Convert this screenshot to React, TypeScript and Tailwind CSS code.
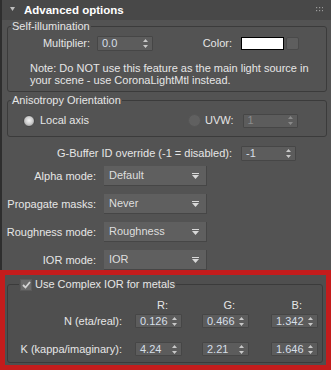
import React from "react";

function SpinArrows({ dim }: { dim?: boolean }) {
    return (
        <svg width="5" height="9" viewBox="0 0 5 9" className="shrink-0">
            <path d="M2.5 0 L5 3 L0 3 Z M0 6 L5 6 L2.5 9 Z" fill={dim ? "#8a8a8a" : "#c8c8c8"} />
        </svg>
    );
}

function Spinner({ value, w, h = "h-[15px]", dim }: { value: string; w: string; h?: string; dim?: boolean }) {
    return (
        <div className={`${w} ${h} flex items-center justify-between pl-[4px] pr-[4px] bg-[#5c5c5c] border border-[#464646] rounded-[1px]`}>
            <span className={dim ? "text-[#8c8c8c]" : "text-[#d6dfe8]"}>{value}</span>
            <SpinArrows dim={dim} />
        </div>
    );
}

function Dropdown({ value }: { value: string }) {
    return (
        <div className="w-[103px] h-[20px] flex items-center justify-between pl-[5px] pr-[7px] bg-[#5f5f5f] border-b border-r border-[#464646]">
            <span className="text-[#dedede]">{value}</span>
            <svg width="7" height="6" viewBox="0 0 7 6">
                <rect x="0" y="0" width="7" height="1" fill="#d8d8d8" />
                <path d="M0 2 L7 2 L3.5 6 Z" fill="#d8d8d8" />
            </svg>
        </div>
    );
}

function DropRow({ label, value }: { label: string; value: string }) {
    return (
        <div className="flex items-center gap-[8px]">
            <div className="w-[94px] text-right whitespace-nowrap">{label}</div>
            <Dropdown value={value} />
        </div>
    );
}

export default function App() {
    return (
        <div className="w-[331px] h-[370px] bg-[#535353] text-[#e6e6e6] text-[11px] leading-[13px] font-['Liberation_Sans',Arial,sans-serif] overflow-hidden">
            <div className="border-l-2 border-[#2e2e2e] h-[270px]">
                {/* header */}
                <div className="h-[20px] bg-[#484848] flex items-center pl-[8px] pr-[5px]">
                    <svg width="5" height="5" viewBox="0 0 5 5" className="mt-[-2px]">
                        <path d="M0 0 L5 0 L2.5 4 Z" fill="#bdbdbd" />
                    </svg>
                    <span className="ml-[9px] font-bold text-[11.5px] text-white">Advanced options</span>
                    <svg width="7" height="5" viewBox="0 0 7 5" className="ml-auto mr-[3px] mt-[-2px]">
                        {[0, 3, 6].map((x) =>
                            [0, 3].map((y) => <rect key={`${x}-${y}`} x={x} y={y} width="1.2" height="1.2" fill="#9a9a9a" />)
                        )}
                    </svg>
                </div>

                {/* self illumination */}
                <fieldset className="ml-[5px] w-[320px] border border-[#3b3b3b] rounded-[3px] pb-[5px]">
                    <legend className="ml-[3px] px-[1px]">Self-illumination</legend>
                    <div className="flex items-center mt-[3px] h-[15px]">
                        <div className="w-[82px] text-right">Multiplier:</div>
                        <div className="ml-[7px]">
                            <Spinner value="0.0" w="w-[56px]" />
                        </div>
                        <div className="w-[79px] text-right">Color:</div>
                        <div className="ml-[9px] w-[43px] h-[13px] bg-white border border-black" />
                        <div className="ml-[2px] w-[13px] h-[13px] bg-[#5e5e5e] border border-[#4a4a4a] rounded-[2px]" />
                    </div>
                    <p className="mt-[11px] pl-[22px] leading-[12px]">
                        Note: Do NOT use this feature as the main light source in
                        <br />
                        your scene - use CoronaLightMtl instead.
                    </p>
                </fieldset>

                {/* anisotropy */}
                <fieldset className="ml-[5px] mt-[2px] w-[320px] border border-[#3b3b3b] rounded-[3px] pb-[8px]">
                    <legend className="ml-[3px] px-[1px]">Anisotropy Orientation</legend>
                    <div className="flex items-center mt-[6px] h-[15px] pl-[15px]">
                        <div className="w-[165px] flex items-center gap-[5px]">
                            <div className="w-[12px] h-[12px] rounded-full bg-[radial-gradient(circle_at_50%_45%,#f4f4f4_0%,#d0d0d0_45%,#858585_100%)] border border-[#474747]" />
                            <span>Local axis</span>
                        </div>
                        <div className="w-[13px] h-[13px] rounded-full bg-[#606060] border border-[#555555]" />
                        <span className="ml-[4px]">UVW:</span>
                        <div className="ml-[9px]">
                            <Spinner value="1" w="w-[55px]" h="h-[14px]" dim />
                        </div>
                    </div>
                </fieldset>

                {/* g-buffer */}
                <div className="flex items-center mt-[9px] gap-[9px]">
                    <div className="w-[230px] text-right">G-Buffer ID override (-1 = disabled):</div>
                    <Spinner value="-1" w="w-[55px]" />
                </div>

                <div className="flex flex-col gap-[8px] mt-[5px]">
                    <DropRow label="Alpha mode:" value="Default" />
                    <DropRow label="Propagate masks:" value="Never" />
                    <DropRow label="Roughness mode:" value="Roughness" />
                    <DropRow label="IOR mode:" value="IOR" />
                </div>
            </div>

            {/* complex IOR */}
            <div className="h-[100px] border-[5px] border-[#c41c1c] bg-[#4f4f4f]">
                <fieldset className="mt-[3px] ml-[2px] w-[316px] h-[85px] border border-[#3b3b3b] rounded-[3px]">
                    <legend className="ml-[11px] px-[1px] flex items-center gap-[3px]">
                        <span className="w-[12px] h-[12px] bg-[#6a6a6a] border border-[#5a5a5a] flex items-center justify-center">
                            <svg width="9" height="8" viewBox="0 0 9 8">
                                <path d="M1 4 L3.5 6.5 L8 1" stroke="#d4d4d4" strokeWidth="1.8" fill="none" />
                            </svg>
                        </span>
                        <span>Use Complex IOR for metals</span>
                    </legend>
                    <div className="flex mt-[8px] h-[13px]">
                        <div className="w-[127px]" />
                        <div className="w-[47px] text-right pr-[14px]">R:</div>
                        <div className="w-[47px] ml-[20px] text-right pr-[14px]">G:</div>
                        <div className="w-[47px] ml-[22px] text-right pr-[16px]">B:</div>
                    </div>
                    <div className="flex items-center mt-[2px]">
                        <div className="w-[114px] text-right">N (eta/real):</div>
                        <div className="ml-[13px]"><Spinner value="0.126" w="w-[47px]" h="h-[14px]" /></div>
                        <div className="ml-[20px]"><Spinner value="0.466" w="w-[47px]" h="h-[14px]" /></div>
                        <div className="ml-[22px]"><Spinner value="1.342" w="w-[47px]" h="h-[14px]" /></div>
                    </div>
                    <div className="flex items-center mt-[14px]">
                        <div className="w-[114px] text-right">K (kappa/imaginary):</div>
                        <div className="ml-[13px]"><Spinner value="4.24" w="w-[47px]" h="h-[14px]" /></div>
                        <div className="ml-[20px]"><Spinner value="2.21" w="w-[47px]" h="h-[14px]" /></div>
                        <div className="ml-[22px]"><Spinner value="1.646" w="w-[47px]" h="h-[14px]" /></div>
                    </div>
                </fieldset>
            </div>
        </div>
    );
}
